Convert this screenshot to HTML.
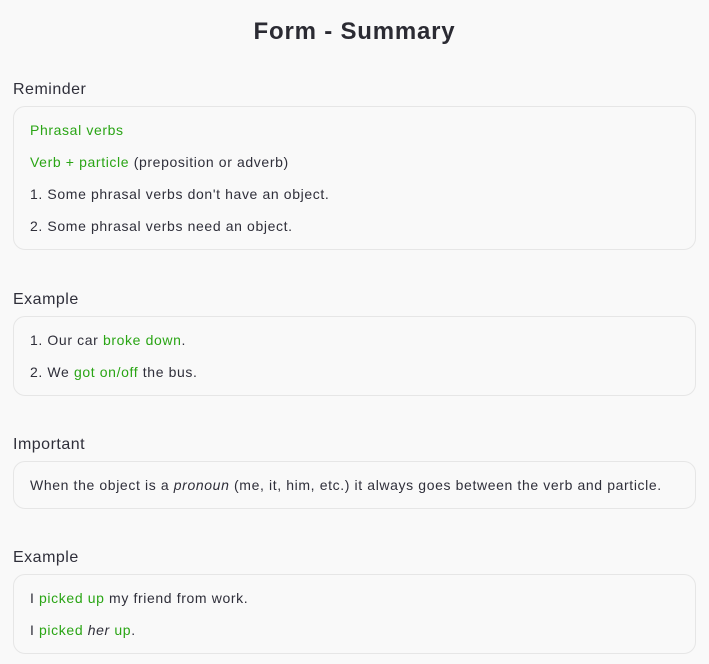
<!DOCTYPE html>
<html><head><style>
body{margin:0;background:#f9f9f9;font-family:"Liberation Sans",sans-serif;color:#2f2f3a;width:709px;height:664px;overflow:hidden}
h1{position:absolute;top:17px;left:0;width:709px;text-align:center;margin:0;font-size:24px;line-height:30px;font-weight:bold;color:#2b2b33;letter-spacing:0.8px}
.lab{position:absolute;left:13px;font-size:16px;line-height:20px;letter-spacing:0.5px}
.card{position:absolute;left:13px;width:649px;border:1px solid #e6e6e6;border-radius:12px;background:#f9f9f9;padding:13px 16px 1px 16px}
.card p{margin:0 0 12px;font-size:14px;line-height:20px;letter-spacing:0.62px;white-space:nowrap}
.g{color:#2aa515}
</style></head><body>
<h1>Form - Summary</h1>
<div class="lab" style="top:80px">Reminder</div>
<div class="card" style="top:106px">
<p class="g">Phrasal verbs</p>
<p><span class="g">Verb + particle</span> (preposition or adverb)</p>
<p>1. Some phrasal verbs don't have an object.</p>
<p>2. Some phrasal verbs need an object.</p>
</div>
<div class="lab" style="top:290px">Example</div>
<div class="card" style="top:316px">
<p>1. Our car <span class="g">broke down</span>.</p>
<p>2. We <span class="g">got on/off</span> the bus.</p>
</div>
<div class="lab" style="top:435px">Important</div>
<div class="card" style="top:461px">
<p>When the object is a <i>pronoun</i> (me, it, him, etc.) it always goes between the verb and particle.</p>
</div>
<div class="lab" style="top:548px">Example</div>
<div class="card" style="top:574px">
<p>I <span class="g">picked up</span> my friend from work.</p>
<p>I <span class="g">picked</span> <i>her</i> <span class="g">up</span>.</p>
</div>
</body></html>
